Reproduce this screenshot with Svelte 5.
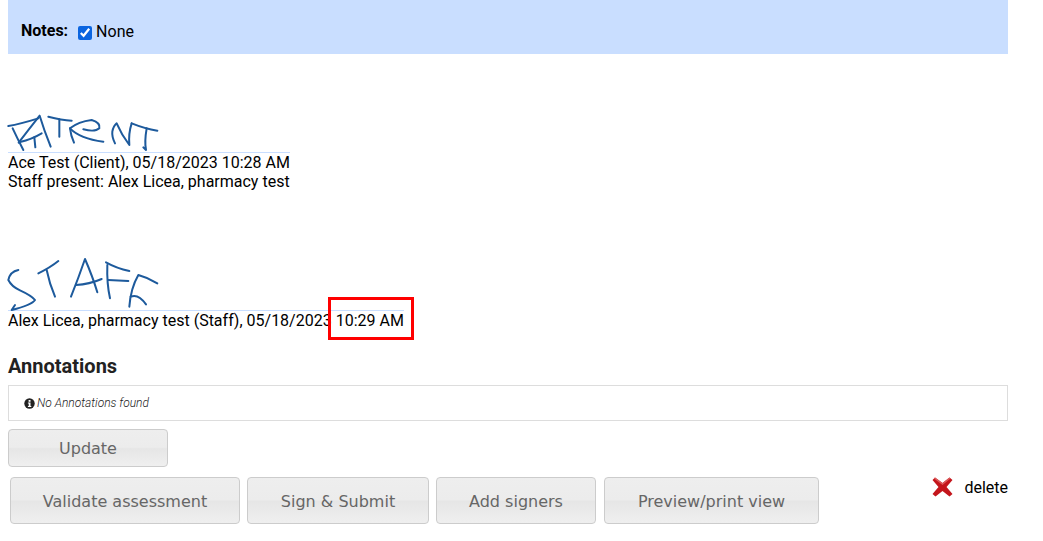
<script lang="ts">
  const buttons = [
    { label: "Validate assessment", width: 230 },
    { label: "Sign & Submit", width: 182 },
    { label: "Add signers", width: 160 },
    { label: "Preview/print view", width: 215 },
  ];

  // signature strokes, in a 3x coordinate space
  const patient = [
    "M25 78 Q60 72 115 55",
    "M38 85 Q52 115 70 150",
    "M56 128 Q85 90 119 47 Q132 90 152 140",
    "M60 126 Q95 118 125 100",
    "M103 112 L106 142",
    "M145 50 Q185 60 215 62",
    "M178 58 L178 110",
    "M222 128 Q212 105 210 85 Q235 65 275 60 Q302 68 298 85 Q285 97 250 88",
    "M210 85 Q240 116 310 125",
    "M345 130 Q335 110 337 95 Q340 78 350 70 Q365 105 388 135 Q385 100 395 70",
    "M395 70 Q435 86 472 92",
    "M440 85 Q433 125 438 150 L430 142",
  ];
  const staff = [
    "M55 45 Q30 50 25 75 Q35 95 60 106 Q95 122 105 135 Q95 150 35 165 L45 150",
    "M115 55 Q150 38 175 18",
    "M140 45 Q148 85 165 125",
    "M213 125 Q235 70 255 12 Q278 65 292 112",
    "M228 90 Q268 88 305 72",
    "M318 22 Q350 40 388 48",
    "M322 30 Q320 85 330 130",
    "M325 75 L385 78",
    "M388 155 Q392 100 415 60 Q445 68 472 85",
    "M392 125 Q415 115 438 148",
  ];
</script>

<div class="page">
  <div class="notes">
    <b>Notes:</b>
    <label><input type="checkbox" checked /> None</label>
  </div>

  <div class="sig first">
    <div class="ink">
      <svg width="162" height="52" viewBox="24 0 486 156" fill="none">
        {#each patient as d}<path {d} />{/each}
      </svg>
    </div>
    <div class="sigText">
      Ace Test (Client), 05/18/2023 10:28 AM<br />
      Staff present: Alex Licea, pharmacy test
    </div>
  </div>

  <div class="sig second">
    <div class="ink">
      <svg width="162" height="55" viewBox="24 0 486 165" fill="none">
        {#each staff as d}<path {d} />{/each}
      </svg>
    </div>
    <div class="sigText">
      Alex Licea, pharmacy test (Staff), 05/18/2023 10:29 AM
      <span class="highlight"></span>
    </div>
  </div>

  <h3>Annotations</h3>
  <div class="annotations">
    <svg class="info" width="11" height="11" viewBox="0 0 11 11">
      <circle cx="5.5" cy="5.5" r="5.2" fill="#222" />
      <rect x="4.6" y="2" width="1.9" height="1.8" fill="#fff" />
      <path d="M3.9 4.6H6.5V8H7.3V9H3.9V8H4.7V5.6H3.9Z" fill="#fff" />
    </svg>
    <em>No Annotations found</em>
  </div>

  <button class="btn update" type="button">Update</button>

  <div class="actions">
    {#each buttons as b}
      <button class="btn" type="button" style="width: {b.width}px">{b.label}</button>
    {/each}
    <div class="delete">
      <svg width="21" height="20" viewBox="0 0 21 20">
        <path d="M3 0.5 L10.5 6 L17.5 0.5 L20.5 3 L14.5 10 L20.5 17 L17.5 19.5 L10.5 14 L3.5 19.5 L0.5 17 L6.5 10 L0.5 3Z" fill="#c4161c" />
        <path d="M3 0.5 L10.5 6 L17.5 0.5 L18.5 1.5 L10.5 8 L2 1.5Z" fill="#dd5a5a" />
      </svg>
      <span>delete</span>
    </div>
  </div>
</div>

<style>
  :global(body) {
    margin: 0;
    background: #fff;
  }

  .page {
    width: 1000px;
    padding-left: 8px;
    font-family: Roboto, sans-serif;
    font-size: 16px;
    color: #000;
  }

  .notes {
    height: 54px;
    box-sizing: border-box;
    padding: 22px 0 0 13px;
    background: #c9deff;
    display: flex;
    align-items: flex-start;
    gap: 10px;
    line-height: 19px;
  }

  .notes b {
    font-size: 16px;
    line-height: 18px;
  }

  .notes label {
    display: flex;
    align-items: center;
    gap: 4px;
  }

  .notes input {
    width: 14px;
    height: 14px;
    margin: 3px 0 0;
    accent-color: #0b65e0;
  }

  .sig {
    width: fit-content;
  }

  .ink {
    border-bottom: 1px solid #c9deff;
  }

  .ink svg {
    display: block;
    overflow: visible;
  }

  .ink path {
    stroke: #1d5a9c;
    stroke-width: 6;
    stroke-linecap: round;
    stroke-linejoin: round;
  }

  .first {
    margin-top: 46px;
  }

  .second {
    margin-top: 64px;
  }

  .sigText {
    position: relative;
    line-height: 19px;
    white-space: nowrap;
  }

  .highlight {
    position: absolute;
    left: 320px;
    top: -14px;
    width: 80px;
    height: 37px;
    border: 3px solid #ff0000;
  }

  h3 {
    margin: 24px 0 0;
    font-size: 20px;
    line-height: 24px;
    font-weight: 700;
    color: #222;
  }

  .annotations {
    box-sizing: border-box;
    height: 36px;
    margin-top: 7px;
    padding: 0 15px;
    border: 1px solid #ddd;
    display: flex;
    align-items: center;
    gap: 2px;
    font-size: 12px;
    font-weight: 300;
    color: #222;
  }

  .btn {
    appearance: none;
    height: 47px;
    padding: 1px 0 0;
    border: 1px solid #ccc;
    border-radius: 4px;
    background: linear-gradient(#eee 0%, #ececec 48%, #e6e6e6 52%, #efefef 100%);
    color: #666;
    font-family: Verdana, "DejaVu Sans", sans-serif;
    font-size: 16px;
  }

  .actions .btn:last-of-type {
    margin-left: 1px;
  }

  .update {
    display: block;
    width: 160px;
    height: 38px;
    margin-top: 8px;
    padding: 0;
  }

  .actions {
    display: flex;
    gap: 7px;
    margin: 10px 0 0 2px;
    align-items: flex-start;
  }

  .delete {
    margin-left: auto;
    display: flex;
    align-items: center;
    gap: 11px;
    height: 20px;
  }
</style>
